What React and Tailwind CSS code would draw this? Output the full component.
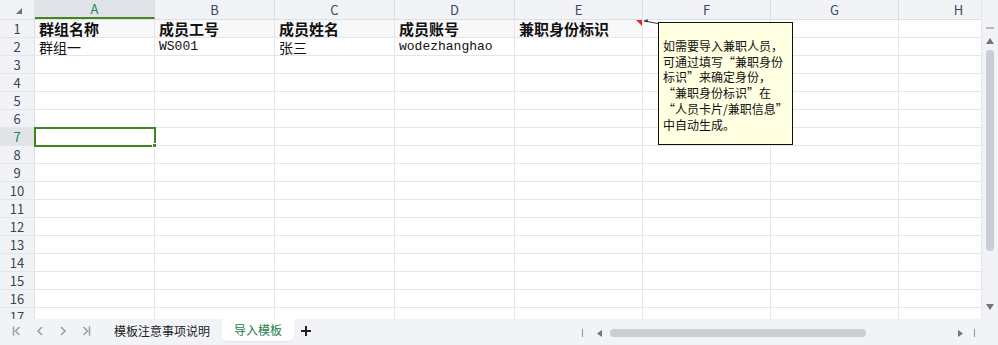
import React from 'react'

const COLS = [
  { key: 'A', w: 'w-[120px]' },
  { key: 'B', w: 'w-[120px]' },
  { key: 'C', w: 'w-[120px]' },
  { key: 'D', w: 'w-[120px]' },
  { key: 'E', w: 'w-[128px]' },
  { key: 'F', w: 'w-[128px]' },
  { key: 'G', w: 'w-[128px]' },
  { key: 'H', w: 'w-[120px]' },
]

const HEAD = ['群组名称', '成员工号', '成员姓名', '成员账号', '兼职身份标识']
const ROW2 = [
  { t: '群组一' },
  { t: 'WS001', mono: true },
  { t: '张三' },
  { t: 'wodezhanghao', mono: true },
]

const NOTE = ['如需要导入兼职人员，', '可通过填写“兼职身份', '标识”来确定身份，', '“兼职身份标识”在', '“人员卡片/兼职信息”', '中自动生成。']

const cn = "font-['Noto_Sans_CJK_SC',sans-serif]"
const mono = "font-['Liberation_Mono','Noto_Sans_CJK_SC',monospace]"

function Cell({ col, row, children }) {
  return (
    <div className={`${col.w} shrink-0 h-full border-r border-[#e3e6ea] relative flex items-center pl-[4px] pt-[1px] overflow-visible whitespace-nowrap ${row === 1 && col.key < 'F' ? 'bg-[#f8f8f8]' : ''}`}>
      {children}
      {row === 7 && col.key === 'A' && (
        <div className="absolute -left-[1px] -top-[1px] w-[122px] h-[20px] border-[2.5px] border-[#3f861c] z-10">
          <div className="absolute -right-[3px] -bottom-[3px] w-[5px] h-[5px] bg-[#3f861c] border border-white" />
        </div>
      )}
      {row === 1 && col.key === 'E' && (
        <div className="absolute right-0 top-0 w-0 h-0 border-t-[6px] border-t-[#e8262b] border-l-[6px] border-l-transparent" />
      )}
    </div>
  )
}

function Row({ n }) {
  const active = n === 7
  return (
    <div className="flex h-[18px] shrink-0 border-b border-[#e3e6ea]">
      <div className={`w-[35px] shrink-0 border-r border-[#dde1e6] flex items-center justify-center text-[13px] leading-[16px] ${active ? 'bg-[#e0e4e9] text-[#22885a]' : 'bg-[#f1f3f6] text-[#3d4456]'}`}>{n}</div>
      {COLS.map((c, i) => (
        <Cell key={c.key} col={c} row={n}>
          {n === 1 && HEAD[i] && <span className={`${cn} font-bold text-[15px] text-[#111] leading-[16px]`}>{HEAD[i]}</span>}
          {n === 2 && ROW2[i] && (
            <span className={`${ROW2[i].mono ? `${mono} text-[13px]` : `${cn} text-[14px]`} text-[#111] leading-[16px]`}>{ROW2[i].t}</span>
          )}
        </Cell>
      ))}
    </div>
  )
}

function Chev({ d, bar }) {
  return (
    <svg width="12" height="12" viewBox="0 0 12 12" fill="none" stroke="#9aa1ab" strokeWidth="1.6" strokeLinecap="round">
      <path d={d} />
      {bar && <path d={bar} />}
    </svg>
  )
}

export default function App() {
  const rows = Array.from({ length: 17 }, (_, i) => i + 1)
  return (
    <div className={`w-[998px] h-[345px] flex flex-col bg-white overflow-hidden ${cn}`}>
      <div className="flex flex-1 min-h-0">
        <div className="flex-1 min-w-0 relative overflow-hidden flex flex-col">
          <div className="flex h-[20px] shrink-0 bg-[#f1f3f6] border-b border-[#dde1e6]">
            <div className="w-[35px] shrink-0 border-r border-[#dde1e6] relative">
              <svg className="absolute left-[16px] top-[8px]" width="6" height="6" viewBox="0 0 6 6"><path d="M6 0 L6 6 L0 6 Z" fill="#6b7079" /></svg>
            </div>
            {COLS.map(c => (
              <div
                key={c.key}
                className={`${c.w} shrink-0 border-r border-[#dde1e6] flex items-center justify-center text-[13px] ${c.key === 'A' ? 'bg-[#e0e4e9] text-[#22885a] border-b-2 border-b-[#43881f]' : 'text-[#414763]'}`}
              >
                {c.key}
              </div>
            ))}
          </div>
          {rows.map(n => <Row key={n} n={n} />)}

          <svg className="absolute left-[640px] top-[17px]" width="20" height="10" viewBox="0 0 20 10">
            <path d="M4 4 L18 6.5" stroke="#333" strokeWidth="1" />
            <path d="M3.5 4 L8 2.2 L7.5 5.5 Z" fill="#333" />
          </svg>
          <div className="absolute left-[658px] top-[22px] w-[135px] h-[123px] bg-[#ffffe1] border border-[#111] pl-[4px] pt-[15px] z-20">
            {NOTE.map((l, i) => (
              <div key={i} className="text-[12px] leading-[15.7px] text-[#111] whitespace-nowrap">{l}</div>
            ))}
          </div>
        </div>

        <div className="w-[17px] shrink-0 bg-[#f1f3f6] border-l border-[#e3e6ea] flex flex-col items-center">
          <div className="mt-[27px] w-[8px] h-[2px] bg-[#b6bac2]" />
          <svg className="mt-[9px]" width="8" height="6" viewBox="0 0 8 6"><path d="M4 0 L8 6 L0 6 Z" fill="#70757e" /></svg>
          <div className="mt-[6px] w-[8px] h-[201px] rounded-full bg-[#cacdd4]" />
          <div className="flex-1" />
          <svg className="mb-[9px]" width="8" height="6" viewBox="0 0 8 6"><path d="M0 0 L8 0 L4 6 Z" fill="#70757e" /></svg>
        </div>
      </div>

      <div className="h-[26px] shrink-0 bg-[#f1f3f6] flex items-start relative">
        <div className="flex items-center h-[24px] pl-[11px] gap-[11px]">
          <Chev d="M8 2.5 L4.5 6 L8 9.5" bar="M2.5 2 L2.5 10" />
          <Chev d="M7.5 2.5 L4 6 L7.5 9.5" />
          <Chev d="M4.5 2.5 L8 6 L4.5 9.5" />
          <Chev d="M4 2.5 L7.5 6 L4 9.5" bar="M9.5 2 L9.5 10" />
        </div>
        <div className="ml-[22px] h-[24px] flex items-center text-[12px] text-[#222]">模板注意事项说明</div>
        <div className="ml-[12px] h-[22px] px-[12px] bg-white rounded-b-[5px] flex items-center text-[12px] text-[#1c7d4a] shadow-[0_1px_1px_rgba(0,0,0,0.06)]">导入模板</div>
        <div className="ml-[7px] h-[24px] flex items-center">
          <svg width="10" height="10" viewBox="0 0 10 10" stroke="#222" strokeWidth="2"><path d="M5 0 L5 10 M0 5 L10 5" /></svg>
        </div>

        <div className="absolute left-[582px] top-[8px] flex items-center h-[12px]">
          <div className="w-[1px] h-[8px] bg-[#8f949c]" />
          <svg className="ml-[14px]" width="5" height="7" viewBox="0 0 5 7"><path d="M5 0 L5 7 L0 3.5 Z" fill="#70757e" /></svg>
          <div className="ml-[8px] w-[256px] h-[8px] rounded-full bg-[#cacdd4]" />
          <svg className="ml-[92px]" width="5" height="7" viewBox="0 0 5 7"><path d="M0 0 L5 3.5 L0 7 Z" fill="#70757e" /></svg>
          <div className="ml-[11px] w-[1px] h-[8px] bg-[#8f949c]" />
        </div>
      </div>
    </div>
  )
}
